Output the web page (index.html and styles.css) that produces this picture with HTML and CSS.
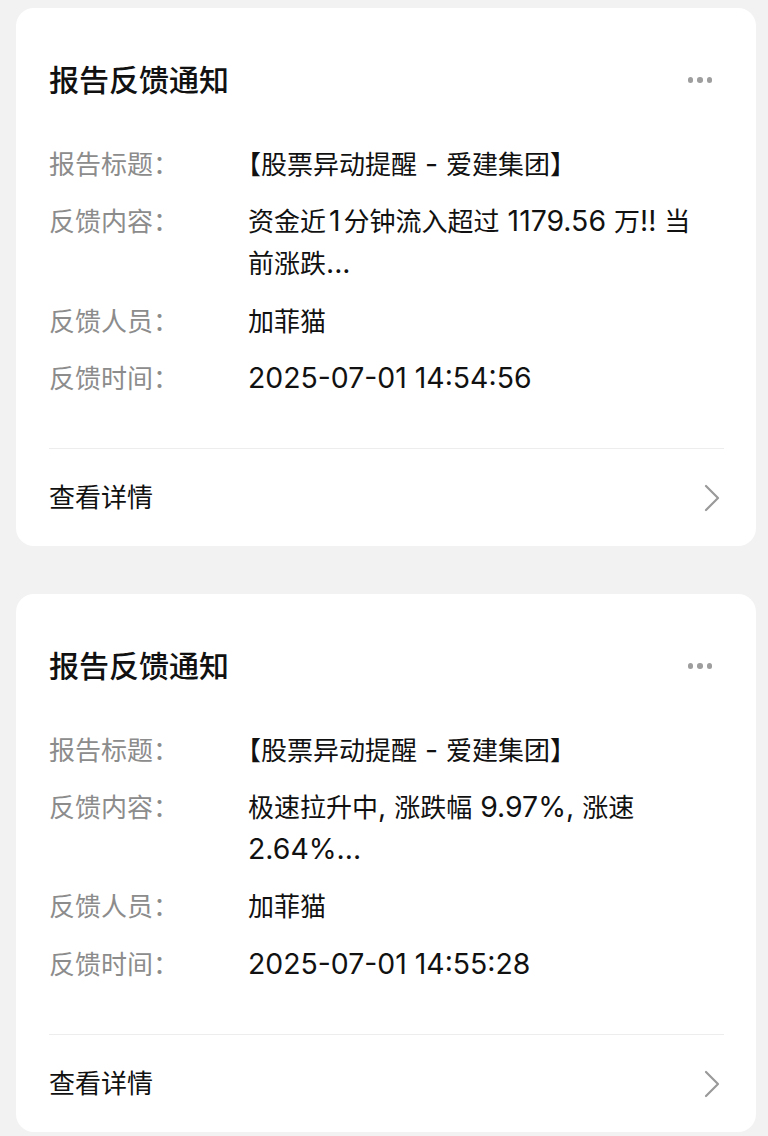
FILE: index.html
```html
<!DOCTYPE html>
<html lang="zh-CN">
<head>
<meta charset="utf-8">
<link rel="stylesheet" href="styles.css">
</head>
<body>
<div class="list">
  <div class="card">
    <div class="card-head">
      <div class="card-title">报告反馈通知</div>
      <div class="more"><span></span><span></span><span></span></div>
    </div>
    <div class="rows">
      <div class="row"><div class="label">报告标题：</div><div class="value">【股票异动提醒<span class="num"> - </span>爱建集团】</div></div>
      <div class="row"><div class="label">反馈内容：</div><div class="value">资金近<span class="num spaced">1</span>分钟流入超过<span class="num"> 1179.56 </span>万<span class="num">!! </span>当前涨跌<span class="num">...</span></div></div>
      <div class="row"><div class="label">反馈人员：</div><div class="value">加菲猫</div></div>
      <div class="row"><div class="label">反馈时间：</div><div class="value"><span class="num">2025-07-01 14:54:56</span></div></div>
    </div>
    <div class="card-foot">
      <div class="foot-text">查看详情</div>
      <svg class="chev" width="16" height="28" viewBox="0 0 16 28"><path d="M2 2 L14 14 L2 26" fill="none" stroke="#9a9a9a" stroke-width="2.2" stroke-linecap="round" stroke-linejoin="round"/></svg>
    </div>
  </div>
  <div class="card">
    <div class="card-head">
      <div class="card-title">报告反馈通知</div>
      <div class="more"><span></span><span></span><span></span></div>
    </div>
    <div class="rows">
      <div class="row"><div class="label">报告标题：</div><div class="value">【股票异动提醒<span class="num"> - </span>爱建集团】</div></div>
      <div class="row"><div class="label">反馈内容：</div><div class="value">极速拉升中<span class="num">, </span>涨跌幅<span class="num"> 9.97%, </span>涨速<span class="num"> 2.64%...</span></div></div>
      <div class="row"><div class="label">反馈人员：</div><div class="value">加菲猫</div></div>
      <div class="row"><div class="label">反馈时间：</div><div class="value"><span class="num">2025-07-01 14:55:28</span></div></div>
    </div>
    <div class="card-foot">
      <div class="foot-text">查看详情</div>
      <svg class="chev" width="16" height="28" viewBox="0 0 16 28"><path d="M2 2 L14 14 L2 26" fill="none" stroke="#9a9a9a" stroke-width="2.2" stroke-linecap="round" stroke-linejoin="round"/></svg>
    </div>
  </div>
</div>
</body>
</html>
```
FILE: styles.css
```css
html, body {
  margin: 0;
  padding: 0;
  background: #f2f2f2;
}
body {
  font-family: "Inter", "Noto Sans CJK SC", sans-serif;
  color: #111;
}
.list {
  display: flex;
  flex-direction: column;
  gap: 48px;
  padding: 8px 12px 0 16px;
}
.card {
  background: #fff;
  border-radius: 18px;
  padding: 0 32px 0 33px;
}
.card-head {
  display: flex;
  align-items: center;
  justify-content: space-between;
  height: 42px;
  padding-top: 51px;
}
.card-title {
  font-size: 30px;
  font-weight: 500;
  line-height: 42px;
  color: #111;
}
.more {
  display: flex;
  gap: 4px;
  margin-right: 12px;
}
.more span {
  width: 5.5px;
  height: 5.5px;
  border-radius: 50%;
  background: #9e9e9e;
}
.rows {
  display: flex;
  flex-direction: column;
  gap: 15.3px;
  padding-top: 43px;
  padding-bottom: 48px;
  border-bottom: 1px solid #ededed;
}
.row {
  display: flex;
  font-size: 26px;
  line-height: 42px;
}
.label {
  width: 199px;
  flex: none;
  color: #8c8c8c;
}
.value {
  flex: 1;
  color: #111;
  padding-right: 16px;
  font-feature-settings: "halt";
}
.num {
  font-size: 28.4px;
  line-height: 1;
}
.spaced {
  margin: 0 3px;
}
.card-foot {
  height: 95px;
  display: flex;
  align-items: center;
  justify-content: space-between;
  padding-top: 2px;
}
.foot-text {
  font-size: 26px;
  line-height: 42px;
  color: #111;
}
.chev {
  margin-right: 4px;
  display: block;
}
```
